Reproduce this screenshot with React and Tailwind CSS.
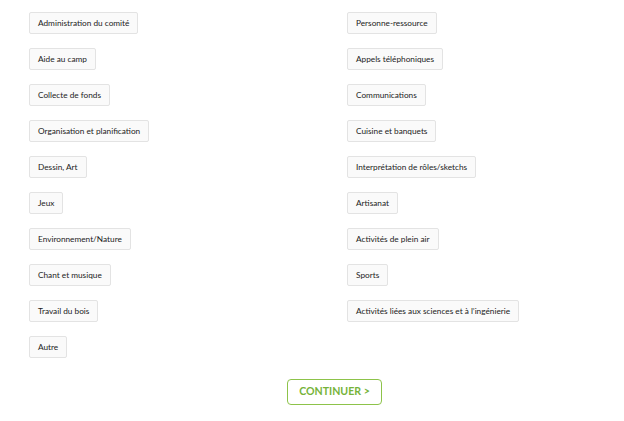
const LEFT = [
  'Administration du comité',
  'Aide au camp',
  'Collecte de fonds',
  'Organisation et planification',
  'Dessin, Art',
  'Jeux',
  'Environnement/Nature',
  'Chant et musique',
  'Travail du bois',
  'Autre',
]

const RIGHT = [
  'Personne-ressource',
  'Appels téléphoniques',
  'Communications',
  'Cuisine et banquets',
  'Interprétation de rôles/sketchs',
  'Artisanat',
  'Activités de plein air',
  'Sports',
  'Activités liées aux sciences et à l’ingénierie',
]

function Chip({ label }) {
  return (
    <div className="flex">
      <button className="h-[22px] px-[8px] bg-[#fafafa] border border-[#e3e3e3] rounded-[2px] text-[8.25px] text-[#222] leading-none whitespace-nowrap">
        {label}
      </button>
    </div>
  )
}

export default function App() {
  return (
    <div className="w-[624px] h-[421px] bg-white font-['Lato',sans-serif] pt-[12px] pl-[29px]">
      <div className="grid grid-cols-[318px_1fr] gap-y-[14px]">
        {LEFT.map((l, i) => (
          <>
            <Chip key={'l' + i} label={l} />
            {RIGHT[i] ? <Chip key={'r' + i} label={RIGHT[i]} /> : <div key={'r' + i} />}
          </>
        ))}
      </div>
      <div className="mt-[19px] ml-[258px]">
        <button className="w-[95px] h-[26px] border border-[#8dc34a] rounded-[4px] text-[#76b33a] font-bold text-[10.6px]">
          CONTINUER &gt;
        </button>
      </div>
    </div>
  )
}
